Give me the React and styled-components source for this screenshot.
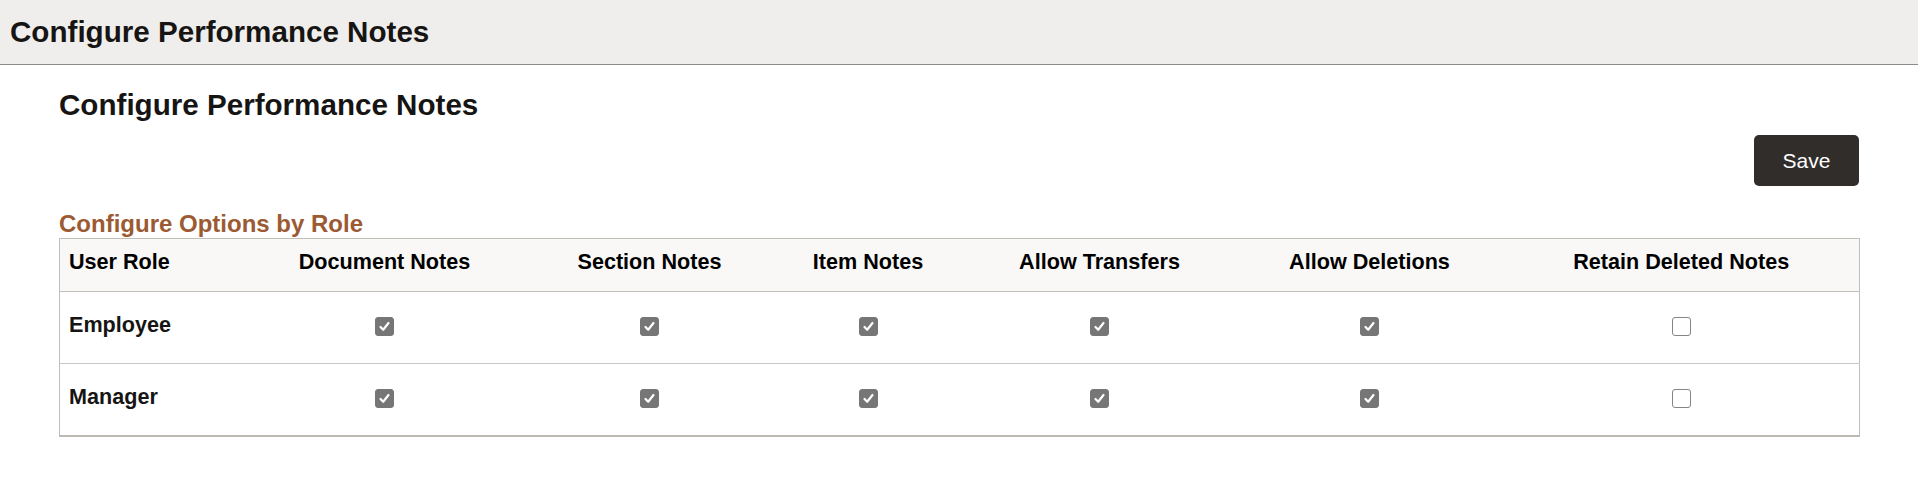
import { Fragment } from "react";
import styled, { createGlobalStyle } from "styled-components";

const columns = [
  { label: "User Role", width: 183, align: "left" },
  { label: "Document Notes", width: 284 },
  { label: "Section Notes", width: 246 },
  { label: "Item Notes", width: 191 },
  { label: "Allow Transfers", width: 272 },
  { label: "Allow Deletions", width: 268 },
  { label: "Retain Deleted Notes", width: 356 },
];

const roles = [
  { name: "Employee", options: [true, true, true, true, true, false] },
  { name: "Manager", options: [true, true, true, true, true, false] },
];

function Check({ checked }) {
  return (
    <Box checked={checked}>
      {checked && (
        <svg width="13" height="13" viewBox="0 0 13 13">
          <polyline points="2.5,7 5.2,9.8 10.5,3" fill="none" stroke="#fff" strokeWidth="2.2" strokeLinecap="round" strokeLinejoin="round" />
        </svg>
      )}
    </Box>
  );
}

function App() {
  return (
    <Fragment>
      <GlobalStyle />
      <Header>
        <HeaderTitle>Configure Performance Notes</HeaderTitle>
      </Header>
      <Main>
        <PageTitle>Configure Performance Notes</PageTitle>
        <Toolbar>
          <SaveButton>Save</SaveButton>
        </Toolbar>
        <SectionTitle>Configure Options by Role</SectionTitle>
        <Table>
          <colgroup>
            {columns.map((c) => (
              <col key={c.label} style={{ width: c.width }} />
            ))}
          </colgroup>
          <thead>
            <tr>
              {columns.map((c) => (
                <HeadCell key={c.label} align={c.align}>{c.label}</HeadCell>
              ))}
            </tr>
          </thead>
          <tbody>
            {roles.map((r) => (
              <tr key={r.name}>
                <RoleCell>{r.name}</RoleCell>
                {r.options.map((o, i) => (
                  <Cell key={i}>
                    <Check checked={o} />
                  </Cell>
                ))}
              </tr>
            ))}
          </tbody>
        </Table>
      </Main>
    </Fragment>
  );
}

const GlobalStyle = createGlobalStyle`
  body{
    margin:0;
    background:#fff;
    font-family:"Liberation Sans", Arial, sans-serif;
    color:#161513;
  }
`;

const Header = styled.header`
  background:#f0eeec;
  border-bottom:1px solid #8e8a86;
  padding:15px 10px;
`;

const HeaderTitle = styled.h1`
  margin:0;
  font-size:29.6px;
  line-height:34px;
  font-weight:bold;
  color:#161513;
`;

const Main = styled.main`
  padding:0 59px;
`;

const PageTitle = styled.h2`
  margin:23px 0 0;
  font-size:29.6px;
  line-height:34px;
  font-weight:bold;
`;

const Toolbar = styled.div`
  display:flex;
  justify-content:flex-end;
  margin-top:13px;
`;

const SaveButton = styled.button`
  width:105px;
  height:51px;
  background:#312d2a;
  color:#fff;
  border:none;
  border-radius:5px;
  font-family:"Liberation Sans", Arial, sans-serif;
  font-size:21px;
  cursor:pointer;
`;

const SectionTitle = styled.h3`
  margin:24px 0 0;
  font-size:24px;
  line-height:28px;
  font-weight:bold;
  color:#9b5a32;
`;

const Table = styled.table`
  width:100%;
  table-layout:fixed;
  border-collapse:collapse;
  border:1px solid #c2beba;
  border-bottom:2px solid #bcb8b4;
  font-size:21.6px;
`;

const HeadCell = styled.th`
  height:53px;
  box-sizing:border-box;
  padding:0 9px 6px;
  background:#f9f8f7;
  border-bottom:1px solid #c2beba;
  text-align:${(p) => p.align || "center"};
  font-weight:bold;
  color:#000;
  white-space:nowrap;
`;

const Cell = styled.td`
  height:72px;
  box-sizing:border-box;
  padding:0 9px 5px;
  border-bottom:1px solid #cbc7c3;
  text-align:center;
  vertical-align:middle;
`;

const RoleCell = styled(Cell)`
  text-align:left;
  font-weight:bold;
  color:#161513;
`;

const Box = styled.span`
  display:inline-flex;
  align-items:center;
  justify-content:center;
  width:19px;
  height:19px;
  box-sizing:border-box;
  border-radius:3px;
  vertical-align:middle;
  background:${(p) => (p.checked ? "#767676" : "#fff")};
  border:1px solid ${(p) => (p.checked ? "#767676" : "#858585")};
`;

export default App;
